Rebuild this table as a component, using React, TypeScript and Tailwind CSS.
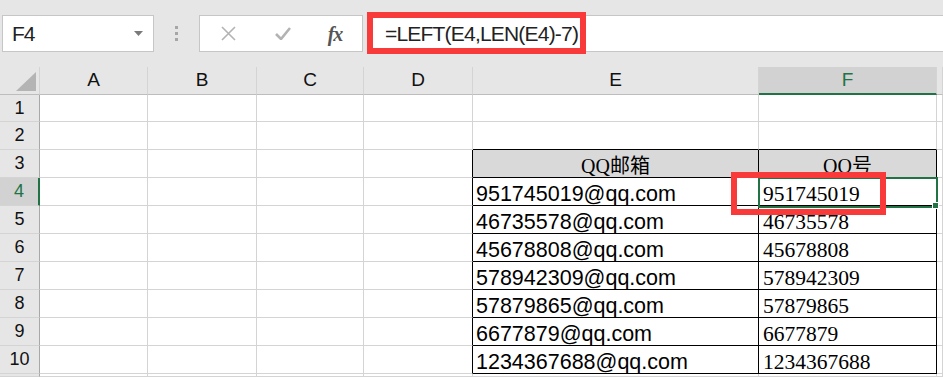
const cols = ["A", "B", "C", "D", "E", "F", ""];

const data: Record<number, [string, string]> = {
  3: ["QQ邮箱", "QQ号"],
  4: ["951745019@qq.com", "951745019"],
  5: ["46735578@qq.com", "46735578"],
  6: ["45678808@qq.com", "45678808"],
  7: ["578942309@qq.com", "578942309"],
  8: ["57879865@qq.com", "57879865"],
  9: ["6677879@qq.com", "6677879"],
  10: ["1234367688@qq.com", "1234367688"],
};

const rows = [1, 2, 3, 4, 5, 6, 7, 8, 9, 10, 11];

function cellClass(row: number, col: number) {
  const inTable = row >= 3 && row <= 10;
  let right = "border-r-[#d4d4d4]";
  let bottom = "border-b-[#d4d4d4]";
  let bg = "bg-white";
  if (inTable && (col === 3 || col === 4 || col === 5)) right = "border-r-black";
  if ((col === 4 || col === 5) && row >= 2 && row <= 10) bottom = "border-b-black";
  if (row === 3 && (col === 4 || col === 5)) bg = "bg-[#d9d9d9]";
  return `border-r border-b ${right} ${bottom} ${bg}`;
}

function Cell({ row, col }: { row: number; col: number }) {
  const d = data[row];
  let content: React.ReactNode = null;
  if (d && col === 4) {
    content =
      row === 3 ? (
        <span className="w-full text-center text-[20px] leading-[22px] font-['Liberation_Serif','Noto_Sans_CJK_SC',serif]">
          {d[0]}
        </span>
      ) : (
        <span className="pl-[3px] text-[21.5px] leading-[22px] font-['Liberation_Sans',sans-serif]">{d[0]}</span>
      );
  }
  if (d && col === 5) {
    content =
      row === 3 ? (
        <span className="w-full text-center text-[20px] leading-[22px] font-['Liberation_Serif','Noto_Sans_CJK_SC',serif]">
          {d[1]}
        </span>
      ) : (
        <span className="pl-[4px] text-[21.5px] leading-[22px] font-['Liberation_Serif',serif]">{d[1]}</span>
      );
  }
  return <div className={`${cellClass(row, col)} flex items-end overflow-hidden whitespace-nowrap text-black`}>{content}</div>;
}

export default function App() {
  return (
    <div className="relative w-[943px] h-[377px] overflow-hidden bg-white font-['Liberation_Sans',sans-serif]">
      {/* formula bar */}
      <div className="h-[67px] bg-[#e6e6e6] flex items-start pt-[15px]">
        <div className="ml-[2px] w-[152px] h-[37px] border border-[#c6c6c6] bg-white flex items-center justify-between pl-[9px] pr-[10px]">
          <span className="text-[21px] tracking-[-1px] text-[#222]">F4</span>
          <svg width="9" height="5" viewBox="0 0 9 5">
            <path d="M0 0h9L4.5 5z" fill="#7a7a7a" />
          </svg>
        </div>
        <div className="w-[45px] h-[37px] flex flex-col items-center justify-center gap-[3px]">
          <span className="w-[3px] h-[3px] bg-[#a6a6a6]" />
          <span className="w-[3px] h-[3px] bg-[#a6a6a6]" />
          <span className="w-[3px] h-[3px] bg-[#a6a6a6]" />
        </div>
        <div className="w-[164px] h-[37px] border border-[#c6c6c6] bg-white flex items-center">
          <div className="w-[56px] flex justify-center">
            <svg width="15" height="15" viewBox="0 0 15 15">
              <path d="M1 1l13 13M14 1L1 14" stroke="#b3b3b3" strokeWidth="1.6" fill="none" />
            </svg>
          </div>
          <div className="w-[54px] flex justify-center">
            <svg width="16" height="13" viewBox="0 0 16 13">
              <path d="M1 7l5 5L15 1" stroke="#b3b3b3" strokeWidth="2.6" fill="none" />
            </svg>
          </div>
          <div className="w-[50px] flex justify-center">
            <span className="italic text-[20px] font-bold text-[#555] font-['Liberation_Serif',serif] tracking-[-1px]">fx</span>
          </div>
        </div>
        <div className="ml-[4px] flex-1 h-[37px] border-y border-l border-[#c6c6c6] bg-white flex items-center pl-[17px]">
          <span className="text-[21px] tracking-[-0.8px] text-[#222]">=LEFT(E4,LEN(E4)-7)</span>
        </div>
      </div>

      {/* sheet */}
      <div className="grid grid-cols-[40px_108px_109px_107px_109px_286px_178px_1fr] grid-rows-[28px_27px_repeat(9,28px)_1fr] h-[310px]">
        <div className="bg-[#e6e6e6] border-r border-b border-r-[#d4d4d4] border-b-[#bdbdbd] flex items-end justify-end pr-[3px] pb-[3px]">
          <svg width="20" height="19" viewBox="0 0 20 19">
            <path d="M20 0V19H0z" fill="#b4b4b4" />
          </svg>
        </div>
        {cols.map((c) =>
          c === "F" ? (
            <div
              key={c}
              className="bg-[#d2d2d2] border-r border-r-[#d4d4d4] border-b-2 border-b-[#217346] flex items-center justify-center text-[19px] text-[#217346]"
            >
              {c}
            </div>
          ) : (
            <div
              key={c || "g"}
              className="bg-[#e6e6e6] border-r border-b border-r-[#d4d4d4] border-b-[#bdbdbd] flex items-center justify-center text-[19px] text-[#111]"
            >
              {c}
            </div>
          )
        )}
        {rows.map((r) => (
          <RowCells key={r} row={r} />
        ))}
      </div>

      {/* annotations and selection */}
      <div className="absolute left-[758px] top-[177px] w-[180px] h-[31px] border-2 border-[#217346]" />
      <div className="absolute left-[932px] top-[202px] w-[7px] h-[7px] bg-[#217346] border border-white" />
      <div className="absolute left-[367px] top-[12px] w-[219px] h-[42px] border-[6px] border-[#f93a3a]" />
      <div className="absolute left-[731px] top-[172px] w-[155px] h-[43px] border-[6px] border-[#f93a3a]" />
    </div>
  );
}

function RowCells({ row }: { row: number }) {
  const selected = row === 4;
  return (
    <>
      <div
        className={
          selected
            ? "bg-[#d2d2d2] border-r-2 border-r-[#217346] border-b border-b-[#d4d4d4] flex items-center justify-center text-[18px] text-[#217346]"
            : "bg-[#e6e6e6] border-r border-b border-r-[#a8a8a8] border-b-[#d4d4d4] flex items-center justify-center text-[18px] text-[#111]"
        }
      >
        {row <= 10 ? row : ""}
      </div>
      {[0, 1, 2, 3, 4, 5, 6].map((c) => (
        <Cell key={c} row={row} col={c} />
      ))}
    </>
  );
}
